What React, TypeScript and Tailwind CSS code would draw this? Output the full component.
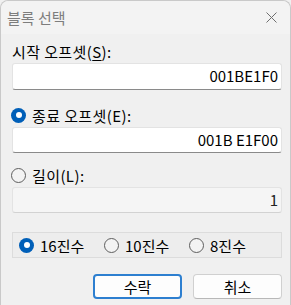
import React from "react";

const font = { fontFamily: '"Noto Sans CJK KR", "Noto Sans", sans-serif' };

function Radio({ checked }: { checked: boolean }) {
  return checked ? (
    <span className="flex h-[15px] w-[15px] shrink-0 items-center justify-center rounded-full bg-[#005fb8]">
      <span className="h-[6px] w-[6px] rounded-full bg-white" />
    </span>
  ) : (
    <span className="h-[15px] w-[15px] shrink-0 rounded-full border border-[#5e5e5e] bg-[#f3f3f3]" />
  );
}

function Field({ value, disabled }: { value: string; disabled?: boolean }) {
  return (
    <div
      className={
        "flex h-full items-center justify-end rounded-[3px] border border-[#e3e3e3] pr-[3px] text-[15px] " +
        (disabled
          ? "border-b-[#d2d2d2] bg-[#f5f5f5] text-[#222]"
          : "border-b-[#8a8a8a] bg-white text-black")
      }
    >
      {value}
    </div>
  );
}

export default function App() {
  return (
    <div className="h-[305px] w-[291px] bg-[#f0f0f0]" style={font}>
      <div className="flex h-[305px] flex-col rounded-t-[8px] border-x border-t border-[#c9c9c9] bg-[#f0f0f0]">
        <div className="flex h-[33px] shrink-0 items-center justify-between rounded-t-[8px] bg-[#f3f3f3] pl-[6px] pr-[13px]">
          <span className="text-[15px] leading-none text-[#7d7d7d]">블록 선택</span>
          <svg width="11" height="11" viewBox="0 0 11 11">
            <path d="M0.5 0.5 L10.5 10.5 M10.5 0.5 L0.5 10.5" stroke="#6e6e6e" strokeWidth="1" fill="none" />
          </svg>
        </div>
        <div className="flex flex-col pl-[11px] pr-[8px] text-[15px] text-black">
          <div className="mt-[7px] flex h-[20px] items-center leading-none tracking-[0.4px]">
            시작 오프셋(<span className="underline underline-offset-2">S</span>):
          </div>
          <div className="mt-[2px] h-[27px]">
            <Field value="001BE1F0" />
          </div>
          <div className="ml-[-1px] mt-[15px] flex h-[20px] items-center gap-[6px] leading-none">
            <Radio checked />
            <span className="tracking-[0.4px]">종료 오프셋(E):</span>
          </div>
          <div className="mt-[2px] h-[26px]">
            <Field value="001B E1F00" />
          </div>
          <div className="ml-[-1px] mt-[12px] flex h-[20px] items-center gap-[6px] leading-none">
            <Radio checked={false} />
            <span className="tracking-[0.4px]">길이(L):</span>
          </div>
          <div className="mt-[2px] h-[26px]">
            <Field value="1" disabled />
          </div>
          <div className="mt-[19px] flex h-[26px] items-center border border-[#dcdcdc] bg-[#ededed] pl-[6px] leading-none">
            <div className="flex w-[85px] items-center gap-[6px]">
              <Radio checked />
              <span>16진수</span>
            </div>
            <div className="flex w-[85px] items-center gap-[6px]">
              <Radio checked={false} />
              <span>10진수</span>
            </div>
            <div className="flex items-center gap-[6px]">
              <Radio checked={false} />
              <span>8진수</span>
            </div>
          </div>
          <div className="mt-[16px] flex justify-end gap-[11px]">
            <button className="flex h-[25px] w-[89px] items-center justify-center rounded-[4px] border-2 border-[#2d7fd0] bg-[#fdfdfd] leading-none">
              수락
            </button>
            <button className="flex h-[25px] w-[89px] items-center justify-center rounded-[4px] border border-[#d0d0d0] border-b-[#b8b8b8] bg-[#fdfdfd] leading-none">
              취소
            </button>
          </div>
        </div>
      </div>
    </div>
  );
}
